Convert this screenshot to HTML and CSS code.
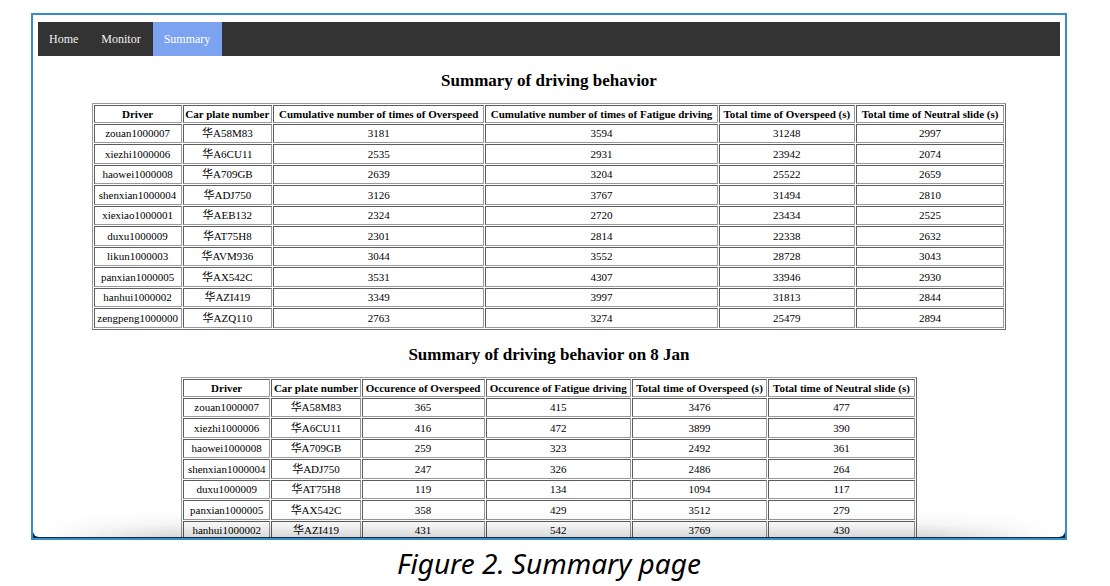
FILE: index.html
```html
<!DOCTYPE html>
<html lang="en">
<head>
<meta charset="utf-8">
<title>Summary page</title>
<link rel="stylesheet" href="styles.css">
</head>
<body>
<figure class="figure">
<div class="frame">
<div class="screen">
<nav class="nav">
<a class="nav-link" href="#home">Home</a>
<a class="nav-link" href="#monitor">Monitor</a>
<a class="nav-link active" href="#summary" aria-current="page">Summary</a>
</nav>
<main>
<h2 class="title">Summary of driving behavior</h2>
<table class="data total">
<colgroup><col class="t-driver"><col class="t-plate"><col class="t-over"><col class="t-fatigue"><col class="t-overtime"><col></colgroup>
<thead>
<tr><th>Driver</th><th>Car plate number</th><th>Cumulative number of times of Overspeed</th><th>Cumulative number of times of Fatigue driving</th><th>Total time of Overspeed (s)</th><th>Total time of Neutral slide (s)</th></tr>
</thead>
<tbody>
<tr><td>zouan1000007</td><td>华A58M83</td><td>3181</td><td>3594</td><td>31248</td><td>2997</td></tr>
<tr><td>xiezhi1000006</td><td>华A6CU11</td><td>2535</td><td>2931</td><td>23942</td><td>2074</td></tr>
<tr><td>haowei1000008</td><td>华A709GB</td><td>2639</td><td>3204</td><td>25522</td><td>2659</td></tr>
<tr><td>shenxian1000004</td><td>华ADJ750</td><td>3126</td><td>3767</td><td>31494</td><td>2810</td></tr>
<tr><td>xiexiao1000001</td><td>华AEB132</td><td>2324</td><td>2720</td><td>23434</td><td>2525</td></tr>
<tr><td>duxu1000009</td><td>华AT75H8</td><td>2301</td><td>2814</td><td>22338</td><td>2632</td></tr>
<tr><td>likun1000003</td><td>华AVM936</td><td>3044</td><td>3552</td><td>28728</td><td>3043</td></tr>
<tr><td>panxian1000005</td><td>华AX542C</td><td>3531</td><td>4307</td><td>33946</td><td>2930</td></tr>
<tr><td>hanhui1000002</td><td>华AZI419</td><td>3349</td><td>3997</td><td>31813</td><td>2844</td></tr>
<tr><td>zengpeng1000000</td><td>华AZQ110</td><td>2763</td><td>3274</td><td>25479</td><td>2894</td></tr>
</tbody>
</table>
<h2 class="title">Summary of driving behavior on 8 Jan</h2>
<table class="data daily">
<colgroup><col class="d-driver"><col class="d-plate"><col class="d-over"><col class="d-fatigue"><col class="d-overtime"><col></colgroup>
<thead>
<tr><th>Driver</th><th>Car plate number</th><th>Occurence of Overspeed</th><th>Occurence of Fatigue driving</th><th>Total time of Overspeed (s)</th><th>Total time of Neutral slide (s)</th></tr>
</thead>
<tbody>
<tr><td>zouan1000007</td><td>华A58M83</td><td>365</td><td>415</td><td>3476</td><td>477</td></tr>
<tr><td>xiezhi1000006</td><td>华A6CU11</td><td>416</td><td>472</td><td>3899</td><td>390</td></tr>
<tr><td>haowei1000008</td><td>华A709GB</td><td>259</td><td>323</td><td>2492</td><td>361</td></tr>
<tr><td>shenxian1000004</td><td>华ADJ750</td><td>247</td><td>326</td><td>2486</td><td>264</td></tr>
<tr><td>duxu1000009</td><td>华AT75H8</td><td>119</td><td>134</td><td>1094</td><td>117</td></tr>
<tr><td>panxian1000005</td><td>华AX542C</td><td>358</td><td>429</td><td>3512</td><td>279</td></tr>
<tr><td>hanhui1000002</td><td>华AZI419</td><td>431</td><td>542</td><td>3769</td><td>430</td></tr>
</tbody>
</table>
</main>
</div>
</div>
<figcaption class="caption">Figure 2. Summary page</figcaption>
</figure>
</body>
</html>
```
FILE: styles.css
```css
* {
  box-sizing: border-box;
}

body {
  margin: 0;
  background: #fff;
  color: #000;
  font-family: "Liberation Serif", "Noto Sans CJK SC", serif;
}

.figure {
  display: flex;
  flex-direction: column;
  height: 100vh;
  margin: 0;
  padding: 13px 43px 4px 31px;
}

.frame {
  flex: 1;
  min-height: 0;
  border: 2px solid #3a8dc4;
  background: #0b2c47;
  padding-bottom: 1px;
}

.screen {
  position: relative;
  height: 100%;
  overflow: hidden;
  padding: 7px 5px 0;
  background: #fff;
  border-radius: 0 0 6px 6px;
}

/* Soft shadow along the bottom edge of the window */
.screen::after {
  content: "";
  position: absolute;
  inset: auto 12px 0;
  height: 26px;
  background: linear-gradient(to bottom, rgba(0, 0, 0, 0), rgba(0, 0, 0, 0.04) 50%, rgba(0, 0, 0, 0.15));
  mask-image: linear-gradient(to right, transparent, #000 12%, #000 88%, transparent);
  pointer-events: none;
}

.nav {
  display: flex;
  background: #333;
}

.nav-link {
  padding: 10px 12px 10px 11px;
  color: #f2f2f2;
  font-size: 12px;
  line-height: 14px;
  text-decoration: none;
}

.nav-link.active {
  background: #7ba3f0;
  color: #fff;
}

.title {
  margin: 15px 0 12px;
  font-size: 17px;
  line-height: 20px;
  text-align: center;
}

.data {
  margin: 0 auto;
  border: 1px solid;
  border-color: #999 #6a6a6a #6a6a6a #999;
  border-spacing: 1px;
  table-layout: fixed;
  font-size: 11px;
  line-height: 15px;
  text-align: center;
}

.total {
  width: 89.5%;
}

.daily {
  width: 72%;
}

.data th,
.data td {
  height: 19px;
  padding: 0;
  border: 1px solid;
  border-color: #5c5c5c #999 #999 #5c5c5c;
  white-space: nowrap;
}

.data th {
  height: 18px;
}

.data tbody tr:nth-child(even) td {
  height: 20px;
}

.t-driver { width: 9.7%; }
.t-plate { width: 9.9%; }
.t-over { width: 23.3%; }
.t-fatigue { width: 25.7%; }
.t-overtime { width: 15%; }

.d-driver { width: 12%; }
.d-plate { width: 12.3%; }
.d-over { width: 16.9%; }
.d-fatigue { width: 20%; }
.d-overtime { width: 18.6%; }

.caption {
  padding-top: 5px;
  font-family: "Noto Sans", sans-serif;
  font-size: 28px;
  font-style: italic;
  line-height: 37px;
  text-align: center;
}
```
